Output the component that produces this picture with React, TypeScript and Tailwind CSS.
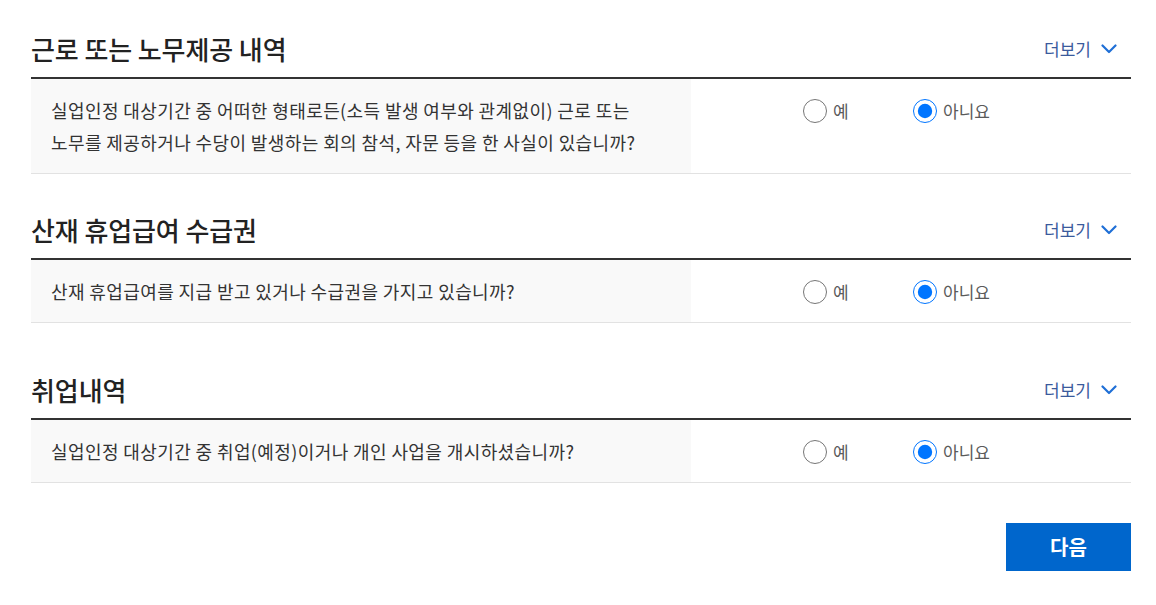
import React from 'react';

type Question = {
  title: string;
  lines: string[];
  gap: string;
};

const SECTIONS: Question[] = [
  {
    title: '근로 또는 노무제공 내역',
    lines: [
      '실업인정 대상기간 중 어떠한 형태로든(소득 발생 여부와 관계없이) 근로 또는',
      '노무를 제공하거나 수당이 발생하는 회의 참석, 자문 등을 한 사실이 있습니까?',
    ],
    gap: 'pt-[31px]',
  },
  {
    title: '산재 휴업급여 수급권',
    lines: ['산재 휴업급여를 지급 받고 있거나 수급권을 가지고 있습니까?'],
    gap: 'pt-[38px]',
  },
  {
    title: '취업내역',
    lines: ['실업인정 대상기간 중 취업(예정)이거나 개인 사업을 개시하셨습니까?'],
    gap: 'pt-[49px]',
  },
];

const font = { fontFamily: '"Noto Sans CJK KR", "Noto Sans", sans-serif' };

const Chevron = () => (
  <svg width="16" height="10" viewBox="0 0 16 10" fill="none" className="ml-[10px]">
    <path d="M1.5 1.5 8 8l6.5-6.5" stroke="#1f6fd6" strokeWidth="2.2" strokeLinecap="round" strokeLinejoin="round" />
  </svg>
);

const Section: React.FC<{ q: Question; idx: number }> = ({ q, idx }) => (
  <section className={q.gap}>
    <div className="flex items-center justify-between border-b-2 border-[#333] pb-[10px]">
      <h2 className="text-[26px] leading-[36px] font-medium tracking-[-0.1px] text-[#222]">{q.title}</h2>
      <button className="flex items-center pr-[14px] text-[17px] text-[#3a5a9c]">
        더보기
        <Chevron />
      </button>
    </div>
    <div className="flex border-b border-[#e2e2e2]">
      <div className="w-[660px] bg-[#f9f9f9] px-5 py-[15px] text-[18px] leading-[32px] tracking-[0.4px] text-[#333]">
        {q.lines.map((l, i) => (
          <div key={i}>{l}</div>
        ))}
      </div>
      <div className="flex items-start pl-[112px] pt-[19px]">
        {['예', '아니요'].map((label, i) => (
          <label key={label} className="flex w-[110px] items-center gap-[6px] text-[17px] text-[#5a5a5a]">
            <input
              type="radio"
              name={`q${idx}`}
              defaultChecked={i === 1}
              className="m-0 h-6 w-6 accent-[#0075ff]"
            />
            {label}
          </label>
        ))}
      </div>
    </div>
  </section>
);

export default function App() {
  return (
    <div className="min-h-screen bg-white" style={font}>
      <div className="mx-auto w-[1100px] ml-[31px]">
        {SECTIONS.map((q, i) => (
          <Section key={i} q={q} idx={i} />
        ))}
        <div className="flex justify-end pt-[40px]">
          <button className="h-[48px] w-[125px] bg-[#0066cc] text-[20px] font-bold text-white">다음</button>
        </div>
      </div>
    </div>
  );
}
